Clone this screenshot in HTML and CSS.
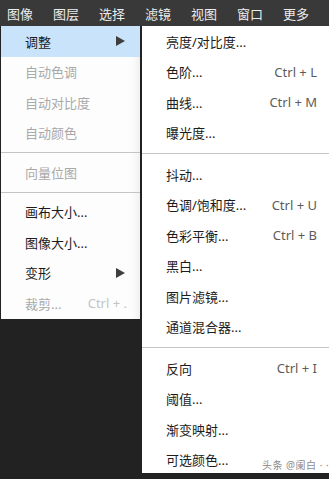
FILE: index.html
```html
<!DOCTYPE html>
<html lang="zh">
<head>
  <meta charset="UTF-8">
  <meta name="viewport" content="width=device-width, initial-scale=1.0">
  <title>图像 - 调整</title>
  <link rel="stylesheet" href="styles.css">
</head>
<body>

  <!-- Menu bar -->
  <nav class="menubar">
    <span>图像</span>
    <span>图层</span>
    <span>选择</span>
    <span>滤镜</span>
    <span>视图</span>
    <span>窗口</span>
    <span>更多</span>
  </nav>

  <div class="workspace">
    <!-- Image menu -->
    <ul class="menu">
      <li class="item active">调整<span class="arrow"></span></li>
      <li class="item disabled">自动色调</li>
      <li class="item disabled">自动对比度</li>
      <li class="item disabled">自动颜色</li>
      <li class="sep"></li>
      <li class="item disabled">向量位图</li>
      <li class="sep"></li>
      <li class="item">画布大小...</li>
      <li class="item">图像大小...</li>
      <li class="item">变形<span class="arrow"></span></li>
      <li class="item disabled">裁剪...<span class="key">Ctrl + .</span></li>
    </ul>

    <!-- Adjust submenu -->
    <ul class="menu submenu">
      <li class="item">亮度/对比度...</li>
      <li class="item">色阶...<span class="key">Ctrl + L</span></li>
      <li class="item">曲线...<span class="key">Ctrl + M</span></li>
      <li class="item">曝光度...</li>
      <li class="sep"></li>
      <li class="item">抖动...</li>
      <li class="item">色调/饱和度...<span class="key">Ctrl + U</span></li>
      <li class="item">色彩平衡...<span class="key">Ctrl + B</span></li>
      <li class="item">黑白...</li>
      <li class="item">图片滤镜...</li>
      <li class="item">通道混合器...</li>
      <li class="sep"></li>
      <li class="item">反向<span class="key">Ctrl + I</span></li>
      <li class="item">阈值...</li>
      <li class="item">渐变映射...</li>
      <li class="item">可选颜色...</li>
    </ul>
  </div>

  <div class="watermark">头条 @阑白 · ·</div>

</body>
</html>
```

FILE: styles.css
```css
body {
  margin: 0;
  width: 329px;
  height: 479px;
  overflow: hidden;
  background: #222222;
  font-family: "Noto Sans", "Noto Sans CJK SC", sans-serif;
  font-size: 13px;
  position: relative;
}

.menubar {
  display: flex;
  gap: 20px;
  height: 26px;
  padding-left: 7px;
  align-items: center;
  background: #393939;
  color: #ececec;
}

.workspace {
  display: flex;
  align-items: flex-start;
}

.menu {
  list-style: none;
  margin: 0 0 0 1px;
  padding: 0;
  width: 139px;
  background: #fdfdfd;
  box-shadow: inset -8px 0 8px -6px rgba(0, 0, 0, 0.08);
}

.submenu {
  flex: 1;
  margin-left: 2px;
  height: 447px;
  overflow: hidden;
  background: #ffffff;
  box-shadow: none;
}

.item {
  display: flex;
  align-items: center;
  height: 30.5px;
  padding: 0 13px 0 24px;
  color: #1c1c1c;
}

.submenu .item {
  padding: 0 12px 0 24px;
}

.item.active {
  background: #c8e3fa;
}

.item.disabled {
  color: #a9a9a9;
}

.key {
  margin-left: auto;
  color: #5c5c5c;
}

.disabled .key {
  color: #c4c4c4;
}

.arrow {
  margin-left: auto;
  margin-right: 2px;
  width: 0;
  height: 0;
  border-top: 5px solid transparent;
  border-bottom: 5px solid transparent;
  border-left: 9px solid #3e3e3e;
}

.sep {
  height: 1px;
  margin: 4px 0;
  background: #c4c4c4;
}

.submenu .sep {
  margin: 5px 0;
}

.watermark {
  position: absolute;
  left: 262px;
  top: 459px;
  font-size: 10px;
  line-height: 12px;
  color: #8c8c8c;
  letter-spacing: 0.5px;
  white-space: nowrap;
}
```
